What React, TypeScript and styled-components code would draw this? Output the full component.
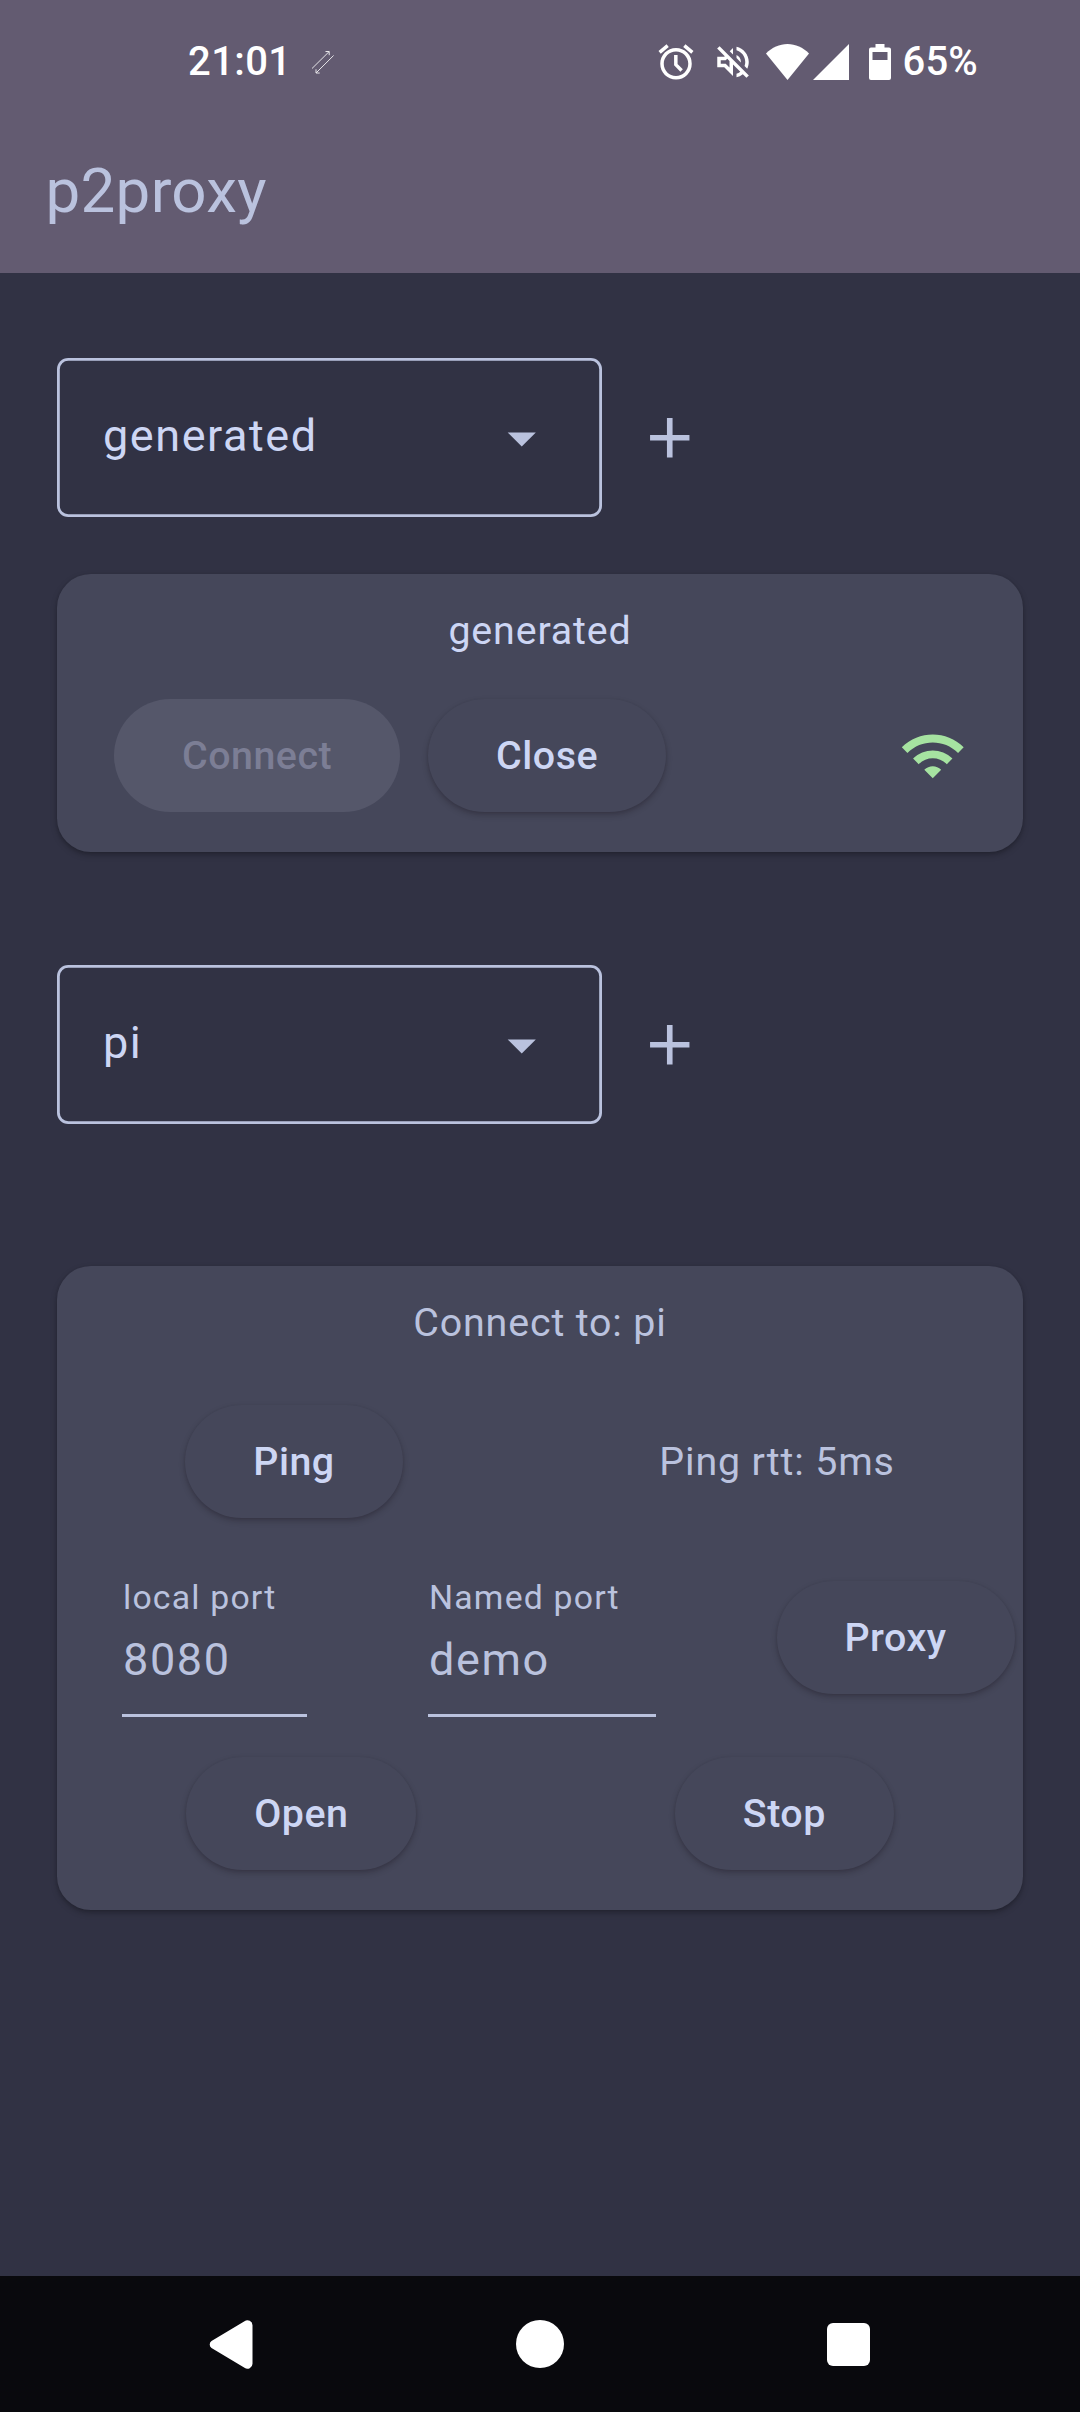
import React from "react";
import styled, { createGlobalStyle } from "styled-components";

const c = {
  bar: "#635b71",
  base: "#313244",
  surface: "#45475a",
  text: "#cdd6f4",
  subtext: "#bac2de",
  green: "#a6e3a1",
};

const Global = createGlobalStyle`
  * { box-sizing: border-box; }
  body { margin: 0; background: ${c.base}; font-family: Roboto, "Noto Sans", sans-serif; }
`;

const Screen = styled.div`
  width: 1080px;
  height: 2412px;
  display: flex;
  flex-direction: column;
  background: ${c.base};
  color: ${c.subtext};
  overflow: hidden;
`;

const Header = styled.header`
  height: 273px;
  background: ${c.bar};
  display: flex;
  flex-direction: column;
`;

const StatusBar = styled.div`
  height: 124px;
  padding: 0 102px 0 188px;
  display: flex;
  align-items: center;
  color: #fff;
`;

const StatusText = styled.span<{ $spacing?: number; $gap?: number }>`
  margin-left: ${(p) => p.$gap ?? 0}px;
  font-size: 40px;
  line-height: 48px;
  font-weight: 500;
  letter-spacing: ${(p) => p.$spacing ?? 0}px;
`;

const StatusIcons = styled.div`
  margin-left: auto;
  display: flex;
  align-items: center;
`;

const Glyph = styled.svg<{ $gap?: number }>`
  display: block;
  flex: none;
  margin-left: ${(p) => p.$gap ?? 0}px;
  fill: currentColor;
`;

const Title = styled.h1`
  margin: 31px 0 0 45.5px;
  font-size: 61.875px;
  line-height: 72px;
  font-weight: 400;
  letter-spacing: 0.3px;
`;

const Main = styled.main`
  flex: 1;
  padding: 85px 57px 0;
  display: flex;
  flex-direction: column;
`;

const PickerRow = styled.div`
  height: 159px;
  display: flex;
  align-items: center;
`;

const Picker = styled.div`
  width: 544.5px;
  height: 159px;
  padding: 0 46.5px 0 46px;
  border-radius: 11.25px;
  box-shadow: inset 0 0 0 2.8px ${c.subtext};
  display: flex;
  align-items: center;
  justify-content: space-between;
`;

const PickerValue = styled.span`
  padding-bottom: 4px;
  font-size: 45px;
  line-height: 53px;
  letter-spacing: 1.55px;
  color: ${c.text};
`;

const Card = styled.section<{ $top: number }>`
  margin-top: ${(p) => p.$top}px;
  margin-bottom: 113px;
  padding: 33px 0 40px;
  border-radius: 33.75px;
  background: ${c.surface};
  box-shadow: 0 3px 6px rgba(0, 0, 0, 0.25), 0 1px 3px rgba(0, 0, 0, 0.1);
  display: flex;
  flex-direction: column;
`;

const Body = styled.p<{ $bright?: boolean }>`
  margin: 0;
  text-align: center;
  font-size: 39.375px;
  line-height: 47px;
  letter-spacing: 0.85px;
  color: ${(p) => (p.$bright ? c.text : c.subtext)};
`;

const Actions = styled.div`
  margin-top: 45px;
  padding: 0 57px;
  display: flex;
  align-items: center;
  gap: 28px;
`;

const SpreadRow = styled.div<{ $top: number }>`
  margin-top: ${(p) => p.$top}px;
  display: flex;
  align-items: center;
  justify-content: space-around;
`;

const Button = styled.button`
  height: 113px;
  padding: 0 68px;
  border: 0;
  border-radius: 57px;
  background: ${c.surface};
  color: ${c.text};
  font-family: inherit;
  font-size: 39.375px;
  line-height: 47px;
  font-weight: 500;
  letter-spacing: 0.5px;
  box-shadow: 0 3px 6px rgba(12, 6, 10, 0.22), 0 1px 3px rgba(12, 6, 10, 0.08);

  &:disabled {
    background: #55576a;
    color: #7c7e95;
    box-shadow: none;
  }
`;

const Push = styled.div`
  margin-left: auto;
  color: ${c.green};
`;

const PortRow = styled.div`
  margin-top: 60px;
  padding-left: 65px;
  display: flex;
  align-items: flex-start;
  gap: 121px;

  ${Button} { margin-top: 3px; }
`;

const Field = styled.div<{ $width: number }>`
  width: ${(p) => p.$width}px;
  height: 139px;
  padding-left: 1px;
  display: flex;
  flex-direction: column;
  gap: 16px;
  border-bottom: 3px solid ${c.subtext};
  white-space: nowrap;
`;

const FieldLabel = styled.label`
  font-size: 33.75px;
  line-height: 39px;
  letter-spacing: 1.2px;
`;

const FieldValue = styled.span`
  font-size: 45px;
  line-height: 53px;
  letter-spacing: 1.6px;
`;

const NavBar = styled.nav`
  height: 136px;
  padding: 0 210px 0 209px;
  background: #09090d;
  color: #fff;
  display: flex;
  align-items: center;
  justify-content: space-between;
`;

function Dropdown({ value }: { value: string }) {
  return (
    <PickerRow>
      <Picker>
        <PickerValue>{value}</PickerValue>
        <Glyph width={67.5} height={67.5} viewBox="0 0 24 24">
          <path d="M7 10.1l5 5 5-5z" />
        </Glyph>
      </Picker>
      <Glyph $gap={34.5} width={67.5} height={67.5} viewBox="0 0 24 24">
        <path d="M19 13h-6v6h-2v-6H5v-2h6V5h2v6h6v2z" />
      </Glyph>
    </PickerRow>
  );
}

export default function App() {
  return (
    <Screen>
      <Global />
      <Header>
        <StatusBar>
          <StatusText $spacing={0.4}>21:01</StatusText>
          <Glyph $gap={19.5} width={24} height={24} viewBox="0 0 24 24">
            <g fill="none" stroke="#fff" strokeWidth={1} opacity={0.85}>
              <path d="M1 18.500L18.200 1.500M14.500 1.500h3.700v3.700" />
              <path d="M22.600 5.500L5 23M5 19.300v3.700h3.700" />
            </g>
          </Glyph>
          <StatusIcons>
            <Glyph width={42} height={42} viewBox="0 0 24 24">
              <path d="M22 5.720l-4.600-3.860-1.290 1.530 4.600 3.860L22 5.720zM7.880 3.390L6.600 1.860 2 5.710l1.290 1.530 4.590-3.850zM12 4c-4.970 0-9 4.030-9 9s4.020 9 9 9a9 9 0 0 0 0-18zm0 16c-3.870 0-7-3.130-7-7s3.130-7 7-7 7 3.130 7 7-3.130 7-7 7z" />
              <path d="M11.900 8v5.500l3.300 3.300" fill="none" stroke="#fff" strokeWidth={2} />
            </Glyph>
            <Glyph $gap={15} width={42} height={42} viewBox="0 0 24 24">
              <path d="M4.340 2.930L2.930 4.340 7.290 8.700 7 9H3v6h4l5 5v-6.590l4.180 4.180c-.65.490-1.380.880-2.180 1.110v2.060a8.940 8.940 0 0 0 3.610-1.750l2.050 2.050 1.410-1.410L4.340 2.930zM10 15.170L7.830 13H5v-2h2.830l.88-.88L10 11.410v3.760zM19 12c0 .82-.15 1.610-.41 2.340l1.530 1.530c.56-1.170.88-2.480.88-3.870 0-4.280-2.990-7.860-7-8.770v2.060c2.890.860 5 3.540 5 6.710zm-7-8l-1.880 1.880L12 7.760zm4.500 8A4.500 4.500 0 0 0 14 7.970v1.790l2.480 2.480c.01-.08.020-.16.020-.24z" />
            </Glyph>
            <Glyph $gap={12} width={43} height={36} viewBox="0 0 43 36">
              <path d="M21.500 36L0 9.500C6 3.500 13.500 0 21.500 0S37 3.500 43 9.500z" />
            </Glyph>
            <Glyph $gap={4} width={36} height={36} viewBox="0 0 36 36">
              <path d="M0 36L36 0v36z" />
            </Glyph>
            <Glyph $gap={20} width={22} height={36} viewBox="0 0 22 36">
              <path
                fillRule="evenodd"
                d="M6.500 0h9v3.500H20a2 2 0 0 1 2 2V34a2 2 0 0 1-2 2H2a2 2 0 0 1-2-2V5.500a2 2 0 0 1 2-2h4.500zM3.500 8v8h15V8z"
              />
            </Glyph>
            <StatusText $gap={11} $spacing={0.2}>65%</StatusText>
          </StatusIcons>
        </StatusBar>
        <Title>p2proxy</Title>
      </Header>

      <Main>
        <Dropdown value="generated" />
        <Card $top={57}>
          <Body $bright>generated</Body>
          <Actions>
            <Button disabled>Connect</Button>
            <Button>Close</Button>
            <Push>
              <Glyph width={67.5} height={67.5} viewBox="0 0 24 24">
                <path d="M1 9l2 2c4.970-4.970 13.030-4.970 18 0l2-2C16.930 2.930 7.080 2.930 1 9zm8 8l3 3 3-3c-1.650-1.660-4.340-1.660-6 0zm-4-4l2 2c2.760-2.760 7.240-2.760 10 0l2-2C15.140 9.140 8.870 9.140 5 13z" />
              </Glyph>
            </Push>
          </Actions>
        </Card>

        <Dropdown value="pi" />
        <Card $top={142}>
          <Body>Connect to: pi</Body>
          <SpreadRow $top={59}>
            <Button>Ping</Button>
            <Body>Ping rtt: 5ms</Body>
          </SpreadRow>
          <PortRow>
            <Field $width={185}>
              <FieldLabel>local port</FieldLabel>
              <FieldValue>8080</FieldValue>
            </Field>
            <Field $width={227.5}>
              <FieldLabel>Named port</FieldLabel>
              <FieldValue>demo</FieldValue>
            </Field>
            <Button>Proxy</Button>
          </PortRow>
          <SpreadRow $top={40}>
            <Button>Open</Button>
            <Button>Stop</Button>
          </SpreadRow>
        </Card>
      </Main>

      <NavBar>
        <Glyph width={44} height={49} viewBox="0 0 44 49">
          <path d="M35.500 1.200a5 5 0 0 1 8 4V43.800a5 5 0 0 1-8 4L2.500 28a4.300 4.300 0 0 1 0-7z" />
        </Glyph>
        <Glyph width={48} height={48} viewBox="0 0 48 48">
          <circle cx="24" cy="24" r="24" />
        </Glyph>
        <Glyph width={43} height={43} viewBox="0 0 43 43">
          <rect width="43" height="43" rx="6" />
        </Glyph>
      </NavBar>
    </Screen>
  );
}
